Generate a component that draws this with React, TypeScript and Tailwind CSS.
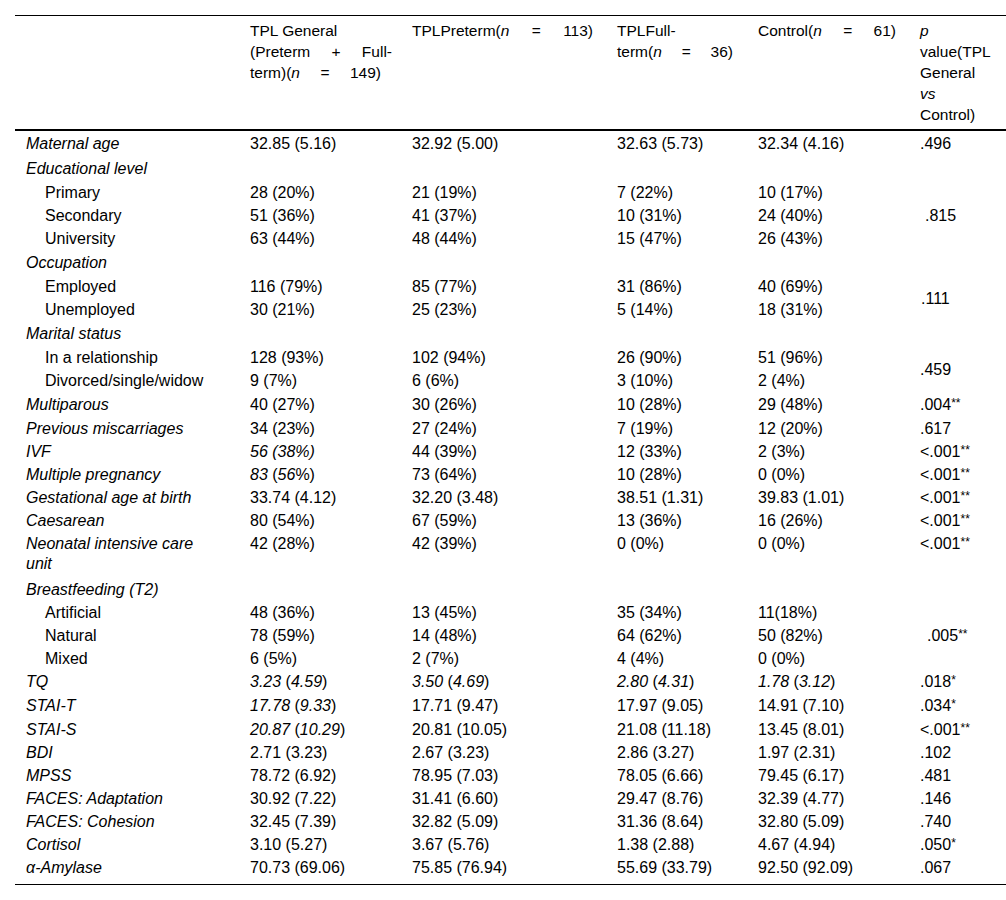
import type { ReactNode } from "react";

type Row = {
  label: ReactNode;
  kind: "item" | "group" | "sub";
  cells?: ReactNode[];
  p?: ReactNode;
  pSpan?: number;
  pClass?: string;
  skipP?: boolean;
  h: string;
  top?: boolean;
  last?: boolean;
};

function Stars({ n }: { n: number }) {
  return <span className="relative -top-[3px] text-[12px]">{"*".repeat(n)}</span>;
}

function P({ v, s = 0 }: { v: string; s?: number }) {
  return (
    <>
      {v}
      {s ? <Stars n={s} /> : null}
    </>
  );
}

function MeanSd({ m, sd }: { m: string; sd: string }) {
  return (
    <>
      <i>{m}</i> (<i>{sd}</i>)
    </>
  );
}

const rows: Row[] = [
  { label: "Maternal age", kind: "item", cells: ["32.85 (5.16)", "32.92 (5.00)", "32.63 (5.73)", "32.34 (4.16)"], p: <P v=".496" />, h: "h-[25px]" },
  { label: "Educational level", kind: "group", h: "h-[25px]" },
  { label: "Primary", kind: "sub", cells: ["28 (20%)", "21 (19%)", "7 (22%)", "10 (17%)"], p: <P v=".815" />, pSpan: 3, pClass: "pl-[16px]", h: "h-[23px]" },
  { label: "Secondary", kind: "sub", cells: ["51 (36%)", "41 (37%)", "10 (31%)", "24 (40%)"], skipP: true, h: "h-[23px]" },
  { label: "University", kind: "sub", cells: ["63 (44%)", "48 (44%)", "15 (47%)", "26 (43%)"], skipP: true, h: "h-[23px]" },
  { label: "Occupation", kind: "group", h: "h-[25px]" },
  { label: "Employed", kind: "sub", cells: ["116 (79%)", "85 (77%)", "31 (86%)", "40 (69%)"], p: <P v=".111" />, pSpan: 2, pClass: "pl-[12px]", h: "h-[23px]" },
  { label: "Unemployed", kind: "sub", cells: ["30 (21%)", "25 (23%)", "5 (14%)", "18 (31%)"], skipP: true, h: "h-[23px]" },
  { label: "Marital status", kind: "group", h: "h-[25px]" },
  { label: "In a relationship", kind: "sub", cells: ["128 (93%)", "102 (94%)", "26 (90%)", "51 (96%)"], p: <P v=".459" />, pSpan: 2, pClass: "pl-[11px]", h: "h-[23px]" },
  { label: "Divorced/single/widow", kind: "sub", cells: ["9 (7%)", "6 (6%)", "3 (10%)", "2 (4%)"], skipP: true, h: "h-[23px]" },
  { label: "Multiparous", kind: "item", cells: ["40 (27%)", "30 (26%)", "10 (28%)", "29 (48%)"], p: <P v=".004" s={2} />, h: "h-[25px]" },
  { label: "Previous miscarriages", kind: "item", cells: ["34 (23%)", "27 (24%)", "7 (19%)", "12 (20%)"], p: <P v=".617" />, h: "h-[23px]" },
  { label: "IVF", kind: "item", cells: [<i key="a">56 (38%)</i>, "44 (39%)", "12 (33%)", "2 (3%)"], p: <P v="<.001" s={2} />, h: "h-[23px]" },
  {
    label: "Multiple pregnancy",
    kind: "item",
    cells: [
      <span key="a">
        <i>83</i> (<i>56</i>%)
      </span>,
      "73 (64%)",
      "10 (28%)",
      "0 (0%)",
    ],
    p: <P v="<.001" s={2} />,
    h: "h-[23px]",
  },
  { label: "Gestational age at birth", kind: "item", cells: ["33.74 (4.12)", "32.20 (3.48)", "38.51 (1.31)", "39.83 (1.01)"], p: <P v="<.001" s={2} />, h: "h-[23px]" },
  { label: "Caesarean", kind: "item", cells: ["80 (54%)", "67 (59%)", "13 (36%)", "16 (26%)"], p: <P v="<.001" s={2} />, h: "h-[23px]" },
  { label: "Neonatal intensive care unit", kind: "item", cells: ["42 (28%)", "42 (39%)", "0 (0%)", "0 (0%)"], p: <P v="<.001" s={2} />, h: "h-[46px]", top: true },
  { label: "Breastfeeding (T2)", kind: "group", h: "h-[23px]" },
  { label: "Artificial", kind: "sub", cells: ["48 (36%)", "13 (45%)", "35 (34%)", "11(18%)"], p: <P v=".005" s={2} />, pSpan: 3, pClass: "pl-[18px]", h: "h-[23px]" },
  { label: "Natural", kind: "sub", cells: ["78 (59%)", "14 (48%)", "64 (62%)", "50 (82%)"], skipP: true, h: "h-[23px]" },
  { label: "Mixed", kind: "sub", cells: ["6 (5%)", "2 (7%)", "4 (4%)", "0 (0%)"], skipP: true, h: "h-[23px]" },
  {
    label: "TQ",
    kind: "item",
    cells: [
      <MeanSd key="a" m="3.23" sd="4.59" />,
      <MeanSd key="b" m="3.50" sd="4.69" />,
      <MeanSd key="c" m="2.80" sd="4.31" />,
      <MeanSd key="d" m="1.78" sd="3.12" />,
    ],
    p: <P v=".018" s={1} />,
    h: "h-[23px]",
  },
  { label: "STAI-T", kind: "item", cells: [<MeanSd key="a" m="17.78" sd="9.33" />, "17.71 (9.47)", "17.97 (9.05)", "14.91 (7.10)"], p: <P v=".034" s={1} />, h: "h-[25px]" },
  { label: "STAI-S", kind: "item", cells: [<MeanSd key="a" m="20.87" sd="10.29" />, "20.81 (10.05)", "21.08 (11.18)", "13.45 (8.01)"], p: <P v="<.001" s={2} />, h: "h-[23px]" },
  { label: "BDI", kind: "item", cells: ["2.71 (3.23)", "2.67 (3.23)", "2.86 (3.27)", "1.97 (2.31)"], p: <P v=".102" />, h: "h-[23px]" },
  { label: "MPSS", kind: "item", cells: ["78.72 (6.92)", "78.95 (7.03)", "78.05 (6.66)", "79.45 (6.17)"], p: <P v=".481" />, h: "h-[23px]" },
  { label: "FACES: Adaptation", kind: "item", cells: ["30.92 (7.22)", "31.41 (6.60)", "29.47 (8.76)", "32.39 (4.77)"], p: <P v=".146" />, h: "h-[23px]" },
  { label: "FACES: Cohesion", kind: "item", cells: ["32.45 (7.39)", "32.82 (5.09)", "31.36 (8.64)", "32.80 (5.09)"], p: <P v=".740" />, h: "h-[23px]" },
  { label: "Cortisol", kind: "item", cells: ["3.10 (5.27)", "3.67 (5.76)", "1.38 (2.88)", "4.67 (4.94)"], p: <P v=".050" s={1} />, h: "h-[23px]" },
  { label: "α-Amylase", kind: "item", cells: ["70.73 (69.06)", "75.85 (76.94)", "55.69 (33.79)", "92.50 (92.09)"], p: <P v=".067" />, h: "h-[28px]", last: true },
];

function Spread({ className, parts }: { className: string; parts: ReactNode[] }) {
  return <div className={`flex justify-between ${className}`}>{parts.map((p, i) => <span key={i}>{p}</span>)}</div>;
}

export default function App() {
  return (
    <div className="min-h-[900px] bg-white pl-[15px] pt-[15px] font-['Liberation_Sans',Arial,sans-serif] text-[16px] text-black">
      <div className="h-px w-[991px] bg-black" />
      <table className="w-[991px] table-fixed border-separate border-spacing-0">
        <colgroup>
          <col className="w-[224px]" />
          <col className="w-[162px]" />
          <col className="w-[205px]" />
          <col className="w-[141px]" />
          <col className="w-[162px]" />
          <col className="w-[97px]" />
        </colgroup>
        <thead>
          <tr className="h-[115px]">
            <th className="border-b-2 border-black" />
            <th className="border-b-2 border-black pl-[11px] pt-[4px] text-left align-top text-[15.5px] leading-[21px] font-normal">
              <div>TPL General</div>
              <Spread className="w-[142px]" parts={["(Preterm", "+", "Full-"]} />
              <Spread className="w-[131px]" parts={[<>term)(<i>n</i></>, "=", "149)"]} />
            </th>
            <th className="border-b-2 border-black pl-[11px] pt-[4px] text-left align-top text-[15.5px] leading-[21px] font-normal">
              <Spread className="w-[181px]" parts={[<>TPLPreterm(<i>n</i></>, "=", "113)"]} />
            </th>
            <th className="border-b-2 border-black pl-[11px] pt-[4px] text-left align-top text-[15.5px] leading-[21px] font-normal">
              <div>TPLFull-</div>
              <Spread className="w-[116px]" parts={[<>term(<i>n</i></>, "=", "36)"]} />
            </th>
            <th className="border-b-2 border-black pl-[11px] pt-[4px] text-left align-top text-[15.5px] leading-[21px] font-normal">
              <Spread className="w-[138px]" parts={[<>Control(<i>n</i></>, "=", "61)"]} />
            </th>
            <th className="border-b-2 border-black pl-[11px] pt-[4px] text-left align-top text-[15.5px] leading-[21px] font-normal">
              <div>
                <i>p</i>
              </div>
              <div>value(TPL</div>
              <div>General</div>
              <div>
                <i>vs</i>
              </div>
              <div>Control)</div>
            </th>
          </tr>
        </thead>
        <tbody>
          {rows.map((row, idx) => {
            const valign = row.top ? "align-top pt-[2px]" : row.last ? "align-middle pb-[4px]" : "align-middle pt-[1px]";
            const cellBase = `pl-[11px] leading-[20px] ${valign}`;
            return (
              <tr key={idx} className={row.h}>
                <td className={`${valign} leading-[20px] pr-[26px] ${row.kind === "sub" ? "pl-[30px]" : "pl-[11px] italic"}`}>
                  {row.label}
                </td>
                {row.kind === "group" ? (
                  <>
                    <td />
                    <td />
                    <td />
                    <td />
                    <td />
                  </>
                ) : (
                  <>
                    {row.cells?.map((c, i) => (
                      <td key={i} className={cellBase}>
                        {c}
                      </td>
                    ))}
                    {row.skipP ? null : (
                      <td
                        rowSpan={row.pSpan}
                        className={row.pSpan ? `leading-[20px] align-middle pt-[1px] ${row.pClass}` : cellBase}
                      >
                        {row.p}
                      </td>
                    )}
                  </>
                )}
              </tr>
            );
          })}
        </tbody>
      </table>
      <div className="h-px w-[991px] bg-black" />
    </div>
  );
}
